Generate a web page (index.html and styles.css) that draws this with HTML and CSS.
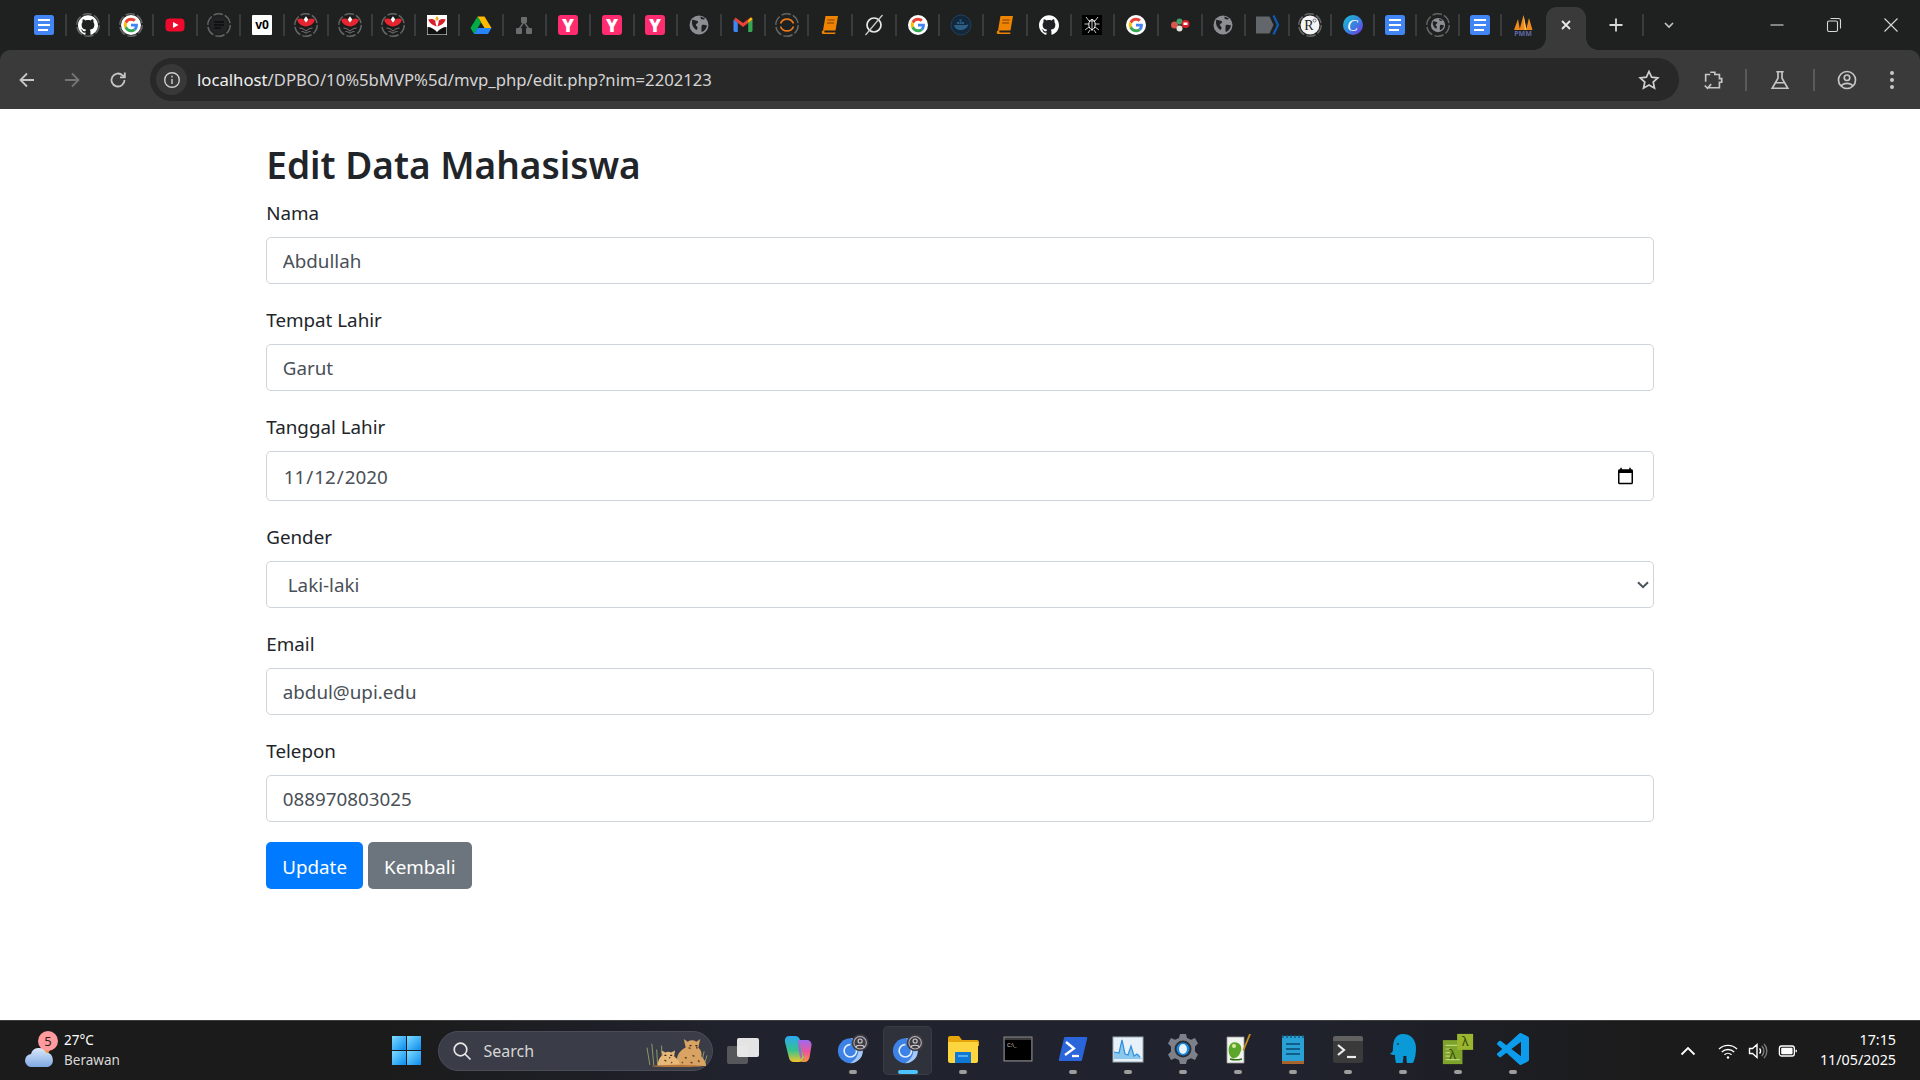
FILE: index.html
```html
<!DOCTYPE html>
<html lang="en">
<head>
<meta charset="utf-8">
<title>Edit Data Mahasiswa</title>
<link rel="stylesheet" href="styles.css">
</head>
<body>
<svg class="defs" aria-hidden="true">
  <defs>
    <linearGradient id="g-canva" x1="0" y1="0" x2="1" y2="1"><stop offset="0" stop-color="#12c4cf"/><stop offset=".55" stop-color="#3a7fe0"/><stop offset="1" stop-color="#7d2ae8"/></linearGradient>
    <linearGradient id="g-win" x1="0" y1="0" x2="1" y2="1"><stop offset="0" stop-color="#7fdcff"/><stop offset="1" stop-color="#0a8cf0"/></linearGradient>
    <linearGradient id="g-cop1" x1="0" y1="0" x2="0" y2="1"><stop offset="0" stop-color="#2ea7f0"/><stop offset=".55" stop-color="#34c38f"/><stop offset="1" stop-color="#f5c42c"/></linearGradient>
    <linearGradient id="g-cop2" x1="0" y1="0" x2="0" y2="1"><stop offset="0" stop-color="#9a6cf0"/><stop offset=".55" stop-color="#f0559b"/><stop offset="1" stop-color="#f59a3c"/></linearGradient>
    <linearGradient id="g-cloud" x1="0" y1="0" x2="0" y2="1"><stop offset="0" stop-color="#dbe9fb"/><stop offset="1" stop-color="#7fa9e3"/></linearGradient>

    <symbol id="ring" viewBox="0 0 24 24"><circle cx="12" cy="12" r="11.2" fill="none" stroke="#636566" stroke-width="1.5" stroke-dasharray="9.5 2.2"/></symbol>
    <symbol id="i-docs" viewBox="0 0 24 24"><rect x="2" y="2" width="20" height="20" rx="2.5" fill="#4285f4"/><path d="M6 7h12M6 12h12M6 17h10" stroke="#fff" stroke-width="2.2"/></symbol>
    <symbol id="i-gh" viewBox="0 0 24 24"><path transform="translate(2 2) scale(.833)" fill="#fff" d="M12 .297c-6.63 0-12 5.373-12 12 0 5.303 3.438 9.8 8.205 11.385.6.113.82-.258.82-.577 0-.285-.01-1.04-.015-2.04-3.338.724-4.042-1.61-4.042-1.61C4.422 18.07 3.633 17.7 3.633 17.7c-1.087-.744.084-.729.084-.729 1.205.084 1.838 1.236 1.838 1.236 1.07 1.835 2.809 1.305 3.495.998.108-.776.417-1.305.76-1.605-2.665-.3-5.466-1.332-5.466-5.93 0-1.31.465-2.38 1.235-3.22-.135-.303-.54-1.523.105-3.176 0 0 1.005-.322 3.3 1.23.96-.267 1.98-.399 3-.405 1.02.006 2.04.138 3 .405 2.28-1.552 3.285-1.23 3.285-1.23.645 1.653.24 2.873.12 3.176.765.84 1.23 1.91 1.23 3.22 0 4.61-2.805 5.625-5.475 5.92.42.36.81 1.096.81 2.22 0 1.606-.015 2.896-.015 3.286 0 .315.21.69.825.57C20.565 22.092 24 17.592 24 12.297c0-6.627-5.373-12-12-12"/></symbol>
    <symbol id="i-g" viewBox="0 0 24 24"><circle cx="12" cy="12" r="10" fill="#fff"/><g transform="translate(4.8 4.8) scale(.3)"><path fill="#EA4335" d="M24 9.5c3.54 0 6.71 1.22 9.21 3.6l6.85-6.85C35.9 2.38 30.47 0 24 0 14.62 0 6.51 5.38 2.56 13.22l7.98 6.19C12.43 13.72 17.74 9.5 24 9.5z"/><path fill="#4285F4" d="M46.98 24.55c0-1.57-.15-3.09-.38-4.55H24v9.02h12.94c-.58 2.96-2.26 5.48-4.78 7.18l7.73 6c4.51-4.18 7.09-10.36 7.09-17.65z"/><path fill="#FBBC05" d="M10.53 28.59c-.5-1.45-.78-2.99-.78-4.59s.27-3.14.78-4.59l-7.98-6.19C.92 16.46 0 20.12 0 24c0 3.88.92 7.54 2.56 10.78l7.97-6.19z"/><path fill="#34A853" d="M24 48c6.48 0 11.93-2.13 15.89-5.81l-7.73-6c-2.15 1.45-4.92 2.3-8.16 2.3-6.26 0-11.57-4.22-13.47-9.91l-7.98 6.19C6.51 42.62 14.62 48 24 48z"/></g></symbol>
    <symbol id="i-yt" viewBox="0 0 24 24"><rect x="2.5" y="5.5" width="19" height="13" rx="4" fill="#ee0a2c"/><path d="M10 9l5.5 3-5.5 3z" fill="#fff"/></symbol>
    <symbol id="i-lines" viewBox="0 0 24 24"><use href="#ring"/><circle cx="12" cy="12" r="8.5" fill="#232425"/><path d="M7 9h10M7 12h10M7 15h7" stroke="#0d0d0d" stroke-width="1.6"/></symbol>
    <symbol id="i-v0" viewBox="0 0 24 24"><rect x="2" y="2" width="20" height="20" rx="1" fill="#fff"/><text x="12" y="16.2" text-anchor="middle" class="svgt bold" font-size="12" fill="#000">v0</text></symbol>
    <symbol id="i-upi" viewBox="0 0 24 24"><use href="#ring"/><circle cx="12" cy="12" r="9.7" fill="#1c1c1c"/><path d="M12 13.500C8 13 3.800 11 3.200 6.500 5.800 5 8.200 5.200 9.800 6.800L12 9.800l2.200-3c1.600-1.600 4-1.800 6.600-.3-.6 4.500-4.800 6.500-8.800 7z" fill="#e8242e"/><path d="M12 3.200l2.300 3.300L12 9.800 9.700 6.500z" fill="#fff"/><path d="M5.500 15c2.500.2 5 1.300 6.500 3.200 1.500-1.900 4-3 6.500-3.200M7.500 18.500c1.700 0 3.200.6 4.500 1.800 1.300-1.200 2.800-1.800 4.500-1.800" fill="none" stroke="#7a7a7a" stroke-width="1"/></symbol>
    <symbol id="i-upis" viewBox="0 0 24 24"><rect x="2" y="2" width="20" height="20" fill="#fff"/><path d="M11.600 13.500C8.200 12.500 4.800 10.500 3.200 6.500c2.800-1 5.500-.6 7 1 .2 2 .6 4 1.400 6zM12.400 13.500c3.400-1 6.800-3 8.400-7-2.800-1-5.500-.6-7 1-.2 2-.6 4-1.400 6z" fill="#d8202c"/><path d="M12 3l1.800 2.800L12 8 10.200 5.800z" fill="#f2b01e"/><path d="M2.500 14c3.500 0 7 2 9.500 5 2.500-3 6-5 9.500-5v7.500h-19z" fill="#111"/></symbol>
    <symbol id="i-drive" viewBox="0 0 24 24"><path d="M8.500 3.500h7L22.500 15h-7z" fill="#ffba00"/><path d="M8.500 3.500L1.500 15l3.500 6 7-11.500z" fill="#00ac47"/><path d="M5 21h14l3.500-6H8.500z" fill="#2684fc"/></symbol>
    <symbol id="i-tree" viewBox="0 0 24 24"><rect x="9" y="4" width="6" height="6" rx="1" fill="#6a6c6e"/><rect x="4" y="15" width="6" height="6" rx="1" fill="#6a6c6e"/><rect x="14" y="15" width="6" height="6" rx="1" fill="#6a6c6e"/><path d="M12 9l-5 7M12 9l5 7" stroke="#6a6c6e" stroke-width="1.400"/></symbol>
    <symbol id="i-y" viewBox="0 0 24 24"><rect x="2" y="2" width="20" height="20" rx="3" fill="#ff2d6f"/><text x="12" y="18.500" text-anchor="middle" class="svgt black" font-size="18" fill="#fff">Y</text></symbol>
    <symbol id="i-globe" viewBox="0 0 24 24"><circle cx="12" cy="12" r="9.500" fill="#8b8f93"/><path d="M5 6.500c2 .5 3.500 1 5.500 1.500 1 .5.500 2-.5 2.500-1.500.5-1.500 2 0 3 1 .7.500 2.500-.5 3.500-2-1-4-3.500-4.500-6.500 0-1.500 0-3 .5-4zM13.500 3.500c1.500 1 3 1 4.500 2-1 1.500-2.500 1-4 .5-.5-.5-.5-1.500-.5-2.500zM15 12c1.500-.5 3.500 0 5 .5-.5 3-2.500 5.500-5 6.500-1-1-.5-2.500-.5-4 0-1 0-2.500.5-3z" fill="#202124"/></symbol>
    <symbol id="i-gmail" viewBox="0 0 24 24"><path d="M3 7l9 7 9-7-1.500-2.500L12 10 4.500 4.500z" fill="#ea4335"/><path d="M2.500 6.500v11c0 .8.700 1.500 1.500 1.500h2.800V9.800z" fill="#4285f4"/><path d="M21.500 6.500v11c0 .8-.7 1.500-1.500 1.500h-2.800V9.800z" fill="#34a853"/><path d="M17.200 7.500l2.300-3c1.200-.4 2 .6 2 2l-4.300 3.300z" fill="#fbbc04"/></symbol>
    <symbol id="i-arc" viewBox="0 0 24 24"><use href="#ring"/><path d="M5.500 10.500a7 7 0 0 1 13 0M5.500 13.500a7 7 0 0 0 13 0" fill="none" stroke="#e9791d" stroke-width="1.700"/></symbol>
    <symbol id="i-book" viewBox="0 0 24 24"><path d="M7.500 3H20l-2.500 14.500H5z" fill="#f08300"/><path d="M5 17.500c-1.500 0-1.800 3.500 0 3.500h12l.6-1.500H7c-1 0-1-1 0-2z" fill="#f08300"/><path d="M9.500 7h7M9 10h7" stroke="#7a3f00" stroke-width="1.200"/></symbol>
    <symbol id="i-slash" viewBox="0 0 24 24"><circle cx="12" cy="12" r="7" fill="none" stroke="#e8e8e8" stroke-width="1.700"/><path d="M20.500 2L3.500 22" stroke="#cfcfcf" stroke-width="1.200"/></symbol>
    <symbol id="i-docker" viewBox="0 0 24 24"><circle cx="12" cy="12" r="10" fill="#13283a" stroke="#1e415f"/><path d="M5 12h12.500c1 0 1.500-1 2-1.500-.5 4-3.500 6.500-8 6.500-3.500 0-6-2-6.500-5z" fill="#2b5f86"/><path d="M8 9h2v2H8zM10.500 9h2v2h-2zM13 9h2v2h-2zM10.500 6.500h2v2h-2z" fill="#2b5f86"/></symbol>
    <symbol id="i-ghw" viewBox="0 0 24 24"><circle cx="12" cy="12" r="10" fill="#202124"/><use href="#i-gh"/></symbol>
    <symbol id="i-spider" viewBox="0 0 24 24"><rect x="2" y="2" width="20" height="20" fill="#000"/><path d="M12 6v12M9 8l6 0M9 8L6 4M15 8l3-4M9 11H4.500M15 11h4.500M9 14l-4 3M15 14l4 3M10 17l-2 3M14 17l2 3" stroke="#ddd" stroke-width=".9" fill="none"/><ellipse cx="12" cy="11.500" rx="3.200" ry="5" fill="none" stroke="#fff" stroke-width="1"/></symbol>
    <symbol id="i-mix" viewBox="0 0 24 24"><circle cx="6.500" cy="12" r="3.500" fill="#d8574b"/><circle cx="11.500" cy="8.500" r="3" fill="#3fa16a"/><circle cx="11.500" cy="15.500" r="3" fill="#e7e4d9"/><circle cx="17.500" cy="11" r="4" fill="#d8202c"/><rect x="15.500" y="9.500" width="4" height="2.500" fill="#fff"/></symbol>
    <symbol id="i-tag" viewBox="0 0 24 24"><path d="M1 3.500h13.500L18.500 12l-4 8.500H1.500a1 1 0 0 1-.5-1z" fill="#63666a"/><path d="M18.500 2.500L23 12l-4.500 9.500" fill="none" stroke="#0d5bb3" stroke-width="2.200"/></symbol>
    <symbol id="i-r" viewBox="0 0 24 24"><use href="#ring"/><circle cx="12" cy="12" r="9.500" fill="#f4f4f4"/><text x="11" y="17" text-anchor="middle" class="svgs2" font-size="14" fill="#222">R</text><circle cx="16.500" cy="7.500" r="1.500" fill="none" stroke="#555" stroke-width=".8"/></symbol>
    <symbol id="i-canva" viewBox="0 0 24 24"><circle cx="12" cy="12" r="10" fill="url(#g-canva)"/><text x="11.500" y="17.500" text-anchor="middle" class="svgs" font-size="16" fill="#fff">C</text></symbol>
    <symbol id="i-globering" viewBox="0 0 24 24"><use href="#ring"/><use href="#i-globe" x="3" y="3" width="18" height="18"/></symbol>
    <symbol id="i-pmm" viewBox="0 0 24 24"><path d="M3 17L7 6l2 11zM8.500 17L12.500 2l3 15zM15 17l3-12 3.500 12z" fill="#f08a1c"/><path d="M12.500 2l3 15h-2z" fill="#ffc24d"/><text x="12" y="23" text-anchor="middle" class="svgt bold" font-size="7" fill="#5e69a8">PMM</text></symbol>

    <symbol id="t-copilot" viewBox="0 0 32 32"><path d="M7 3h6c3 0 4.500 2 5 4l4 16c.6 3-1.500 6-5 6h-5c-3 0-4.500-2-5-4L3 9C2.300 6 4 3 7 3z" fill="url(#g-cop1)"/><path d="M16 7h9c3 0 5 2.500 4.500 5.500l-2 12c-.5 2.500-2.500 4.500-5 4.500h-5c3 0 5-2.500 4.500-6z" fill="url(#g-cop2)"/><path d="M16 7c1.500 4 3 9 4 14 .3 2 0 4-1 5.500-2-5-3-13-3-19.500z" fill="#c04fc8" opacity=".8"/></symbol>
    <symbol id="t-chrome" viewBox="0 0 36 36"><circle cx="15" cy="20" r="14" fill="#3d82e6"/><path d="M15 6a14 14 0 0 1 0 28c5-3 9-8 9-14s-4-11-9-14z" fill="#a9c9f5"/><circle cx="15" cy="20" r="7" fill="none" stroke="#e8f0fc" stroke-width="1.800"/><path d="M15 13a7 7 0 0 1 6 3.500" stroke="#3d82e6" stroke-width="2" fill="none"/><circle cx="26" cy="11" r="9.500" fill="#3f3d42"/><circle cx="26" cy="11" r="7" fill="none" stroke="#b9b5bd" stroke-width="1.200"/><circle cx="26" cy="9" r="2.300" fill="none" stroke="#d2ced6" stroke-width="1.200"/><path d="M21 16c1-3 9-3 10 0" fill="none" stroke="#d2ced6" stroke-width="1.200"/></symbol>
    <symbol id="t-folder" viewBox="0 0 32 32"><path d="M1 5c0-1 .8-2 2-2h9l3 4h15c1 0 2 .8 2 2v4H1z" fill="#e8a60d"/><path d="M1 9h30v19c0 1-.8 2-2 2H3c-1 0-2-1-2-2z" fill="#fcd53f"/><path d="M9 19h14c.8 0 1 .5 1 1v10H8V20c0-.5.4-1 1-1z" fill="#0f78d4"/><rect x="11" y="22" width="10" height="2" fill="#50b0f0"/></symbol>
    <symbol id="t-cmd" viewBox="0 0 32 32"><rect x="2" y="4" width="28" height="24" fill="#3b3b3b" stroke="#8c8c8c"/><rect x="3" y="7" width="26" height="20" fill="#000"/><text x="5" y="14" class="svgt" font-size="5.500" fill="#ddd">C:\_</text></symbol>
    <symbol id="t-ps" viewBox="0 0 32 32"><path d="M8 4h21c1 0 1.500.7 1.200 1.500L25 27c-.2.700-1 1-1.500 1H3c-1 0-1.500-.7-1.200-1.500L7 5c.2-.6.500-1 1-1z" fill="#2a66d9"/><path d="M9 9l8 6.500L8 22" fill="none" stroke="#fff" stroke-width="2.300"/><path d="M15 23h7" stroke="#fff" stroke-width="2.300"/></symbol>
    <symbol id="t-perf" viewBox="0 0 32 32"><rect x="1" y="4" width="30" height="25" fill="#e9f1f8" stroke="#9aa7b3"/><path d="M2 26v-7l5 1 3-13 3 14 3 1 3-9 3 10 3-2 3 3 2 2z" fill="#8cc7ec"/><path d="M2 19l5 1 3-13 3 14 3 1 3-9 3 10 3-2 3 3" fill="none" stroke="#2f8fdc" stroke-width="1.200"/></symbol>
    <symbol id="t-gear" viewBox="0 0 32 32"><path d="M13 1h6l1 4 4 1.800L28 5l3 5.500-3 3v5l3 3L28 27l-4-1.800L20 27l-1 4h-6l-1-4-4-1.800L4 27l-3-5.500 3-3v-5l-3-3L4 5l4 1.800L12 5z" fill="#7c8189"/><circle cx="16" cy="16" r="8.500" fill="#2c3038"/><circle cx="16" cy="16" r="6.500" fill="#1688e0"/><ellipse cx="16" cy="16" rx="4" ry="5" fill="#e8f2fb"/></symbol>
    <symbol id="t-npp" viewBox="0 0 32 32"><path d="M5 4h17v26H5z" fill="#f1f4ee" stroke="#999" stroke-width=".8"/><path d="M7 14c1-4 5-6 9-4 4 2 4 7 2 10-1 3-4 6-8 5-3-2-4-7-3-11z" fill="#5ca62a"/><circle cx="12" cy="13" r="2" fill="#d8ec9c"/><path d="M8 26c3 1 8 1 12 0" stroke="#2d6f10" stroke-width="1.500"/><path d="M29 1l-7 17-1.500-1L27 1z" fill="#c48a22"/></symbol>
    <symbol id="t-note" viewBox="0 0 32 32"><rect x="5" y="3" width="22" height="27" fill="#29a1d6"/><path d="M5 28h22v3H5z" fill="#a8642a"/><path d="M6 2v3M10 2v3M14 2v3M18 2v3M22 2v3M26 2v3" stroke="#14587c" stroke-width="1.400"/><path d="M9 11h14M9 16h14M9 21h14" stroke="#0f5f88" stroke-width="2"/></symbol>
    <symbol id="t-term" viewBox="0 0 32 32"><rect x="1" y="3" width="30" height="27" rx="2.500" fill="#3a3a3a"/><path d="M1 5.500A2.500 2.500 0 0 1 3.500 3h25A2.500 2.500 0 0 1 31 5.500V8H1z" fill="#616161"/><path d="M6 12l6 5-6 5" fill="none" stroke="#ececec" stroke-width="2.200"/><path d="M15 24h9" stroke="#ececec" stroke-width="2.200"/></symbol>
    <symbol id="t-ele" viewBox="0 0 32 32"><path d="M16 1c8 0 13 6 13 14 0 6-1 11-3 15h-6c-.5-3-.6-5-.6-7h-3c0 2-.2 4-.8 7H9c-.8-3-1-6-1-8-2 0-4 0-5-2 2 0 3-1 3-5C6 7 9 1 16 1z" fill="#0a9ad8"/><circle cx="11" cy="11" r="1" fill="#063a55"/></symbol>
    <symbol id="t-hs" viewBox="0 0 36 36"><rect x="1" y="8" width="22" height="27" fill="#7da32b"/><path d="M4 14h16M4 18h5M4 22h5M4 26h5M4 30h16" stroke="#bcd57a" stroke-width="1.300"/><text x="12" y="29" text-anchor="middle" class="svgt" font-size="15" fill="#3e5410">λ</text><rect x="17" y="1" width="18" height="18" fill="#9ab52e"/><text x="26" y="15" text-anchor="middle" class="svgt" font-size="14" fill="#34470c">λ</text></symbol>
    <symbol id="t-code" viewBox="0 0 24 24"><path fill="#0d9bec" d="M23.150 2.587L18.210.21a1.494 1.494 0 0 0-1.705.29l-9.460 8.630-4.120-3.128a.999.999 0 0 0-1.276.057L.327 7.261A1 1 0 0 0 .326 8.740L3.899 12 .326 15.260a1 1 0 0 0 .001 1.479L1.650 17.940a.999.999 0 0 0 1.276.057l4.120-3.128 9.460 8.630a1.492 1.492 0 0 0 1.704.29l4.942-2.377A1.500 1.500 0 0 0 24 20.060V3.939a1.500 1.500 0 0 0-.85-1.352zm-5.146 14.861L10.826 12l7.178-5.448v10.896z"/></symbol>
  </defs>
</svg>

<header class="chrome">
  <div class="tabstrip">
    <div class="tab"><svg class="fav"><use href="#i-docs"/></svg></div>
    <div class="tab"><svg class="fav"><use href="#ring"/><use href="#i-gh"/></svg></div>
    <div class="tab"><svg class="fav"><use href="#ring"/><use href="#i-g"/></svg></div>
    <div class="tab"><svg class="fav"><use href="#i-yt"/></svg></div>
    <div class="tab"><svg class="fav"><use href="#i-lines"/></svg></div>
    <div class="tab"><svg class="fav"><use href="#i-v0"/></svg></div>
    <div class="tab"><svg class="fav"><use href="#i-upi"/></svg></div>
    <div class="tab"><svg class="fav"><use href="#i-upi"/></svg></div>
    <div class="tab"><svg class="fav"><use href="#i-upi"/></svg></div>
    <div class="tab"><svg class="fav"><use href="#i-upis"/></svg></div>
    <div class="tab"><svg class="fav"><use href="#i-drive"/></svg></div>
    <div class="tab"><svg class="fav"><use href="#i-tree"/></svg></div>
    <div class="tab"><svg class="fav"><use href="#i-y"/></svg></div>
    <div class="tab"><svg class="fav"><use href="#i-y"/></svg></div>
    <div class="tab"><svg class="fav"><use href="#i-y"/></svg></div>
    <div class="tab"><svg class="fav"><use href="#i-globe"/></svg></div>
    <div class="tab"><svg class="fav"><use href="#i-gmail"/></svg></div>
    <div class="tab"><svg class="fav"><use href="#i-arc"/></svg></div>
    <div class="tab"><svg class="fav"><use href="#i-book"/></svg></div>
    <div class="tab"><svg class="fav"><use href="#i-slash"/></svg></div>
    <div class="tab"><svg class="fav"><use href="#i-g"/></svg></div>
    <div class="tab"><svg class="fav"><use href="#i-docker"/></svg></div>
    <div class="tab"><svg class="fav"><use href="#i-book"/></svg></div>
    <div class="tab"><svg class="fav"><use href="#i-ghw"/></svg></div>
    <div class="tab"><svg class="fav"><use href="#i-spider"/></svg></div>
    <div class="tab"><svg class="fav"><use href="#i-g"/></svg></div>
    <div class="tab"><svg class="fav"><use href="#i-mix"/></svg></div>
    <div class="tab"><svg class="fav"><use href="#i-globe"/></svg></div>
    <div class="tab"><svg class="fav"><use href="#i-tag"/></svg></div>
    <div class="tab tab-tight"><svg class="fav"><use href="#i-r"/></svg></div>
    <div class="tab tab-tight"><svg class="fav"><use href="#i-canva"/></svg></div>
    <div class="tab tab-tight"><svg class="fav"><use href="#i-docs"/></svg></div>
    <div class="tab tab-tight"><svg class="fav"><use href="#i-globering"/></svg></div>
    <div class="tab tab-tight"><svg class="fav"><use href="#i-docs"/></svg></div>
    <div class="tab tab-tight tab-last"><svg class="fav"><use href="#i-pmm"/></svg></div>
    <div class="tab-active">
      <svg class="ico-close" viewBox="0 0 12 12"><path d="M2 2l8 8M10 2l-8 8"/></svg>
    </div>
    <svg class="ico-plus" viewBox="0 0 16 16"><path d="M8 1.500v13M1.500 8h13"/></svg>
    <span class="strip-sep"></span>
    <svg class="ico-chev" viewBox="0 0 12 12"><path d="M2 4l4 4 4-4"/></svg>
    <div class="winctl">
      <svg class="wc" viewBox="0 0 16 16"><path d="M1.500 8h13"/></svg>
      <svg class="wc" viewBox="0 0 16 16"><rect x="1.500" y="4" width="10" height="10.500" rx="1.500"/><path d="M4.500 1.500h8a2 2 0 0 1 2 2v8"/></svg>
      <svg class="wc" viewBox="0 0 16 16"><path d="M1.500 1.500l13 13M14.500 1.500l-13 13"/></svg>
    </div>
  </div>
  <div class="toolbar">
    <button class="tb-btn" type="button" aria-label="Back"><svg class="ico" viewBox="0 0 20 20"><path d="M17 10H4M10 3.500L3.500 10l6.500 6.500"/></svg></button>
    <button class="tb-btn tb-dim" type="button" aria-label="Forward"><svg class="ico" viewBox="0 0 20 20"><path d="M3 10h13M10 3.500l6.500 6.500-6.500 6.500"/></svg></button>
    <button class="tb-btn" type="button" aria-label="Reload"><svg class="ico" viewBox="0 0 20 20"><path d="M16.500 10a6.500 6.500 0 1 1-2-4.700L16.500 7"/><path d="M16.800 2.500V7.300H12"/></svg></button>
    <div class="omnibox">
      <span class="chip"><svg class="ico-info" viewBox="0 0 18 18"><circle cx="9" cy="9" r="7.300"/><path d="M9 8v5"/><path d="M9 4.800v1.800"/></svg></span>
      <span class="url"><span class="url-host">localhost</span>/DPBO/10%5bMVP%5d/mvp_php/edit.php?nim=2202123</span>
      <svg class="ico-star" viewBox="0 0 22 22"><path d="M11 2.500l2.600 5.700 6.200.7-4.600 4.200 1.300 6.100L11 16.100l-5.500 3.100 1.300-6.100-4.600-4.200 6.200-.7z"/></svg>
    </div>
    <svg class="ico tb-ext" viewBox="0 0 24 24"><path d="M9 3.500h5v2.500h5v4.500h2.500v4H19v6H6.500M3 18l3 3 4-4.500M4 14V6h5"/></svg>
    <span class="tb-sep tb-sep1"></span>
    <svg class="ico tb-flask" viewBox="0 0 24 24"><path d="M8 3h8M9.800 3v7L3.500 21h17l-6.300-11V3M7 15h10"/></svg>
    <span class="tb-sep tb-sep2"></span>
    <svg class="ico tb-prof" viewBox="0 0 24 24"><circle cx="12" cy="12" r="9.300"/><circle cx="12" cy="9.500" r="3"/><path d="M5.500 18.500c3-3.800 10-3.800 13 0"/></svg>
    <svg class="tb-menu" viewBox="0 0 6 24"><circle cx="3" cy="5" r="2"/><circle cx="3" cy="12" r="2"/><circle cx="3" cy="19" r="2"/></svg>
  </div>
</header>

<main class="page">
  <div class="container">
    <h2 class="title">Edit Data Mahasiswa</h2>
    <form>
      <div class="group">
        <label class="lbl" for="nama">Nama</label>
        <input class="ctl" id="nama" type="text" value="Abdullah">
      </div>
      <div class="group">
        <label class="lbl" for="tempat">Tempat Lahir</label>
        <input class="ctl" id="tempat" type="text" value="Garut">
      </div>
      <div class="group">
        <label class="lbl" for="tanggal">Tanggal Lahir</label>
        <input class="ctl ctl-date" id="tanggal" type="date" value="2020-11-12">
      </div>
      <div class="group">
        <label class="lbl" for="gender">Gender</label>
        <div class="select-wrap">
          <select class="ctl ctl-select" id="gender">
            <option selected>Laki-laki</option>
            <option>Perempuan</option>
          </select>
          <svg class="select-chev" viewBox="0 0 12 8"><path d="M1 1.200l5 5 5-5"/></svg>
        </div>
      </div>
      <div class="group">
        <label class="lbl" for="email">Email</label>
        <input class="ctl" id="email" type="text" value="abdul@upi.edu">
      </div>
      <div class="group">
        <label class="lbl" for="telepon">Telepon</label>
        <input class="ctl" id="telepon" type="text" value="088970803025">
      </div>
      <div class="actions">
        <button class="btn btn-primary" type="button">Update</button>
        <a class="btn btn-secondary" href="#">Kembali</a>
      </div>
    </form>
  </div>
</main>

<footer class="taskbar">
  <div class="tb-left">
    <div class="weather-ico">
      <svg class="cloud" viewBox="0 0 32 22"><circle cx="21" cy="4" r="4.500" fill="#f0962a"/><path d="M8 21a6.500 6.500 0 0 1-1-13 8 8 0 0 1 15-1.500A7.500 7.500 0 0 1 24 21z" fill="url(#g-cloud)"/></svg>
      <span class="wbadge">5</span>
    </div>
    <div class="weather-txt"><span>27°C</span><span class="wdim">Berawan</span></div>
  </div>
  <svg class="winlogo" viewBox="0 0 29 29"><g fill="url(#g-win)"><rect width="14" height="14"/><rect x="15" width="14" height="14"/><rect y="15" width="14" height="14"/><rect x="15" y="15" width="14" height="14"/></g></svg>
  <div class="search">
    <svg class="search-ico" viewBox="0 0 20 20"><circle cx="8.500" cy="8.500" r="6.300"/><path d="M13 13l5.500 5.500"/></svg>
    <span class="search-txt">Search</span>
    <svg class="cheetah" viewBox="0 0 64 34"><g stroke="#8f9a68" stroke-width="1" fill="none"><path d="M4 32L1 14M8 32L6 10M12 32l-1-16M17 32L16 12M22 32l0-12M57 32l3-14M60 32l3-10"/></g><path d="M33 33c-3-8 0-15 8-19l-2-9 4 3c3-2 6-2 9 0l4-3-2 9c3 3 4 6 3 9 3 3 5 6 5 10z" fill="#d9a463"/><path d="M12 33c0-5 2-9 5-11l-1-5 4 2c2-1 4-1 6 0l4-2-1 6c4 3 6 6 6 10z" fill="#e8b878"/><path d="M44 14l2 1M52 13l1 2M40 24l2 1M48 22l2 1M54 27l1 2M46 29l2 1M37 29l1 1M19 27l2 1M26 29l1 1M24 24l1 1" stroke="#6b4420" stroke-width="1.500"/><path d="M45 12h2M51 12h2M19 22h2M25 22h2" stroke="#3a2410" stroke-width="1.200"/><ellipse cx="32" cy="33" rx="26" ry="1.200" fill="#b5763a"/></svg>
  </div>
  <div class="apps">
    <div class="slot"><svg class="app-taskview" viewBox="0 0 32 26"><rect y="8" width="21" height="18" rx="2" fill="#55575a"/><rect x="10" width="22" height="19" rx="2" fill="#f0f0f0" opacity=".94"/></svg></div>
    <div class="slot"><svg class="app"><use href="#t-copilot"/></svg></div>
    <div class="slot"><svg class="app"><use href="#t-chrome"/></svg><span class="pip"></span></div>
    <div class="slot slot-active"><svg class="app"><use href="#t-chrome"/></svg><span class="pip pip-active"></span></div>
    <div class="slot"><svg class="app"><use href="#t-folder"/></svg><span class="pip"></span></div>
    <div class="slot"><svg class="app"><use href="#t-cmd"/></svg></div>
    <div class="slot"><svg class="app"><use href="#t-ps"/></svg><span class="pip"></span></div>
    <div class="slot"><svg class="app"><use href="#t-perf"/></svg><span class="pip"></span></div>
    <div class="slot"><svg class="app"><use href="#t-gear"/></svg><span class="pip"></span></div>
    <div class="slot"><svg class="app"><use href="#t-npp"/></svg><span class="pip"></span></div>
    <div class="slot"><svg class="app"><use href="#t-note"/></svg><span class="pip"></span></div>
    <div class="slot"><svg class="app"><use href="#t-term"/></svg><span class="pip"></span></div>
    <div class="slot"><svg class="app"><use href="#t-ele"/></svg><span class="pip"></span></div>
    <div class="slot"><svg class="app"><use href="#t-hs"/></svg><span class="pip"></span></div>
    <div class="slot"><svg class="app"><use href="#t-code"/></svg><span class="pip"></span></div>
  </div>
  <div class="tray">
    <svg class="tray-ico tray-chev" viewBox="0 0 20 20"><path d="M3.500 13.500L10 7l6.500 6.500"/></svg>
    <svg class="tray-ico" viewBox="0 0 20 20"><path d="M1 8a13 13 0 0 1 18 0M3.800 11a9 9 0 0 1 12.400 0M6.500 13.800a5 5 0 0 1 7 0"/><circle cx="10" cy="16.500" r="1.200" fill="#fff" stroke="none"/></svg>
    <svg class="tray-ico" viewBox="0 0 20 20"><path d="M1.500 7.500h3L9 3.500v13l-4.500-4h-3zM11.500 7.500a3.500 3.500 0 0 1 0 5"/><path class="tray-dim" d="M13.800 5a7 7 0 0 1 0 10M16 3a10 10 0 0 1 0 14"/></svg>
    <svg class="tray-ico" viewBox="0 0 22 20"><rect x="1.500" y="4.500" width="16.500" height="11" rx="2.500"/><rect x="3.500" y="6.500" width="12.500" height="7" rx="1" fill="#fff" stroke="none"/><path d="M20 8.500v3"/></svg>
    <div class="clock"><span>17:15</span><span>11/05/2025</span></div>
  </div>
</footer>
</body>
</html>
```

FILE: styles.css
```css
* { box-sizing: border-box; }
html, body { margin: 0; padding: 0; height: 100%; }
body {
  display: flex;
  flex-direction: column;
  height: 1080px;
  overflow: hidden;
  background: #fff;
  font-family: "Noto Sans", "Open Sans", sans-serif;
  color: #212529;
}
.defs { position: absolute; width: 0; height: 0; overflow: hidden; }
.svgt { font-family: "Noto Sans", sans-serif; }
.svgs2 { font-family: "Liberation Serif", serif; }
.bold { font-weight: 700; }
.black { font-weight: 900; }
.svgs { font-family: "Liberation Serif", serif; font-style: italic; }

/* browser chrome */
.chrome { flex: none; height: 109px; background: #1f2020; }
.tabstrip { display: flex; align-items: center; height: 50px; padding-left: 23px; }
.tab {
  flex: none;
  display: flex;
  align-items: center;
  justify-content: center;
  width: 43.7px;
  height: 22px;
  border-right: 2px solid #3a3b3c;
}
.tab-tight { width: 42.5px; }
.tab-last { border-right-color: transparent; }
.fav { width: 24px; height: 24px; display: block; }
.tab-active {
  position: relative;
  flex: none;
  align-self: flex-end;
  display: flex;
  align-items: center;
  justify-content: center;
  width: 40px;
  height: 43px;
  margin-left: 1px;
  padding-bottom: 7px;
  background: #3a3a3a;
  border-radius: 11px 11px 0 0;
}
.tab-active::before,
.tab-active::after {
  content: "";
  position: absolute;
  bottom: 0;
  width: 12px;
  height: 12px;
}
.tab-active::before { left: -12px; background: radial-gradient(circle at 0 0, transparent 11.5px, #3a3a3a 12px); }
.tab-active::after { right: -12px; background: radial-gradient(circle at 100% 0, transparent 11.5px, #3a3a3a 12px); }
.ico-close { width: 12px; height: 12px; fill: none; stroke: #e8e8e8; stroke-width: 1.8; }
.ico-plus { width: 16px; height: 16px; margin-left: 22px; fill: none; stroke: #d8d8d8; stroke-width: 1.8; }
.strip-sep { width: 2px; height: 22px; margin-left: 18px; background: #3a3b3c; }
.ico-chev { width: 12px; height: 12px; margin-left: 19px; fill: none; stroke: #c7c7c7; stroke-width: 1.6; }
.winctl { display: flex; align-items: center; margin-left: 94px; }
.wc { width: 16px; height: 16px; margin-right: 41px; fill: none; stroke: #d8d8d8; stroke-width: 1.1; }
.wc:last-child { margin-right: 0; }

.toolbar {
  display: flex;
  align-items: center;
  height: 59px;
  padding: 0 25px 0 4px;
  background: #3a3a3a;
  border-radius: 10px 10px 0 0;
}
.tb-btn {
  flex: none;
  display: flex;
  align-items: center;
  justify-content: center;
  width: 45.5px;
  height: 40px;
  padding: 0;
  border: 0;
  background: transparent;
}
.ico { width: 22px; height: 22px; fill: none; stroke: #c7c7c7; stroke-width: 1.8; }
.tb-btn .ico { width: 20px; height: 20px; }
.tb-dim .ico { stroke: #757575; }
.omnibox {
  flex: 1;
  display: flex;
  align-items: center;
  height: 43px;
  margin-left: 9.5px;
  padding: 0 19px 0 6px;
  border-radius: 22px;
  background: #282828;
}
.chip {
  flex: none;
  display: flex;
  align-items: center;
  justify-content: center;
  width: 31px;
  height: 31px;
  border-radius: 50%;
  background: #383838;
}
.ico-info { width: 18px; height: 18px; fill: none; stroke: #d0d0d0; stroke-width: 1.4; }
.url { flex: 1; margin-left: 10px; font-size: 16.7px; line-height: 22px; color: #d4d4d4; white-space: nowrap; }
.url-host { color: #f0f0f0; }
.ico-star { flex: none; width: 22px; height: 22px; fill: none; stroke: #d0d0d0; stroke-width: 1.7; }
.tb-ext { flex: none; margin-left: 23px; }
.tb-sep { flex: none; width: 2px; height: 22px; background: #5a5a5a; }
.tb-sep1 { margin-left: 21px; }
.tb-flask { flex: none; margin-left: 22px; }
.tb-sep2 { margin-left: 22px; }
.tb-prof { flex: none; margin-left: 21px; }
.tb-menu { flex: none; width: 6px; height: 24px; margin-left: 31px; fill: #c7c7c7; }

/* page */
.page { flex: 1; min-height: 0; background: #fff; }
.container { width: 1425px; margin: 0 auto; padding: 31.5px 18.75px 0; }
.title { margin: 0 0 8.5px; font-size: 37px; line-height: 48px; font-weight: 600; color: #212529; }
.group { margin-bottom: 20px; }
.lbl { display: block; margin-bottom: 9px; padding-top: 1px; font-size: 18.8px; line-height: 30px; color: #212529; }
.ctl {
  display: block;
  width: 100%;
  height: 47px;
  padding: 1px 15.5px 0;
  border: 1px solid #ced4da;
  border-radius: 5px;
  background: #fff;
  color: #495057;
  font-family: inherit;
  font-size: 18.8px;
}
.ctl-date { height: 50px; }
.select-wrap { position: relative; }
.ctl-select { padding: 1px 20.5px 0; appearance: none; }
.select-chev {
  position: absolute;
  right: 5px;
  top: 20px;
  width: 12px;
  height: 8px;
  fill: none;
  stroke: #4a5259;
  stroke-width: 2;
}
.actions { display: flex; gap: 5px; }
.btn {
  display: block;
  height: 47px;
  padding: 1px 16px 0;
  border: 0;
  border-radius: 5px;
  font-family: inherit;
  font-size: 18.8px;
  line-height: 48px;
  color: #fff;
  text-decoration: none;
}
.btn-primary { background: #007bff; }
.btn-secondary { background: #6c757d; }

/* taskbar */
.taskbar {
  flex: none;
  display: flex;
  align-items: center;
  height: 60px;
  border-top: 1px solid #3d3d3d;
  background: linear-gradient(90deg, #1b1b1b 0, #1b1b1b 20%, #20222d 38%, #20222d 68%, #1b1b1b 86%);
  color: #fff;
}
.tb-left { flex: none; display: flex; align-items: center; width: 391.5px; padding-left: 24px; }
.weather-ico { position: relative; width: 40px; height: 44px; }
.cloud { position: absolute; left: 0; bottom: 5px; width: 32px; height: 22px; overflow: visible; }
.wbadge {
  position: absolute;
  left: 14px;
  top: 2px;
  width: 20px;
  height: 20px;
  border-radius: 50%;
  background: #ff9a9e;
  color: #2a1a1a;
  font-size: 13px;
  line-height: 20px;
  text-align: center;
}
.weather-txt { display: flex; flex-direction: column; padding-bottom: 2px; font-size: 13.5px; line-height: 20px; }
.wdim { color: #d8d8d8; }
.winlogo { flex: none; width: 29px; height: 29px; }
.search {
  flex: none;
  display: flex;
  align-items: center;
  width: 275px;
  height: 40px;
  margin-left: 17px;
  padding-left: 13px;
  border: 1px solid #4a4d58;
  border-radius: 20px;
  background: #3a3d47;
}
.search-ico { flex: none; width: 20px; height: 20px; fill: none; stroke: #e6e6e6; stroke-width: 1.7; }
.search-txt { margin-left: 12px; flex: 1; font-size: 16px; color: #d6d6d6; }
.cheetah { flex: none; width: 62px; height: 33px; margin-right: 4px; }
.apps { flex: none; display: flex; margin-left: 2.5px; }
.slot {
  position: relative;
  flex: none;
  display: flex;
  align-items: center;
  justify-content: center;
  width: 49px;
  height: 49px;
  margin: 0 3px;
  border-radius: 5px;
}
.slot-active { background: rgba(255, 255, 255, .07); box-shadow: inset 0 0 0 1px rgba(255, 255, 255, .05); }
.app { width: 32px; height: 32px; margin-bottom: 3px; }
.app-taskview { width: 32px; height: 26px; }
.pip {
  position: absolute;
  left: 50%;
  bottom: 1px;
  width: 8px;
  height: 4px;
  margin-left: -4px;
  border-radius: 2px;
  background: #9d9d9d;
}
.pip-active { width: 20px; margin-left: -10px; background: #4cc2ff; }
.tray { flex: 1; display: flex; align-items: center; padding-left: 132.5px; padding-right: 24px; }
.tray-ico { flex: none; width: 20px; height: 20px; margin: 0 5px; fill: none; stroke: #fff; stroke-width: 1.4; }
.tray-chev { margin-right: 15px; stroke-width: 1.8; }
.tray-dim { stroke: #7a7a7a; }
.clock { margin-left: auto; padding-bottom: 2px; display: flex; flex-direction: column; align-items: flex-end; font-size: 14.3px; line-height: 20px; }
```
